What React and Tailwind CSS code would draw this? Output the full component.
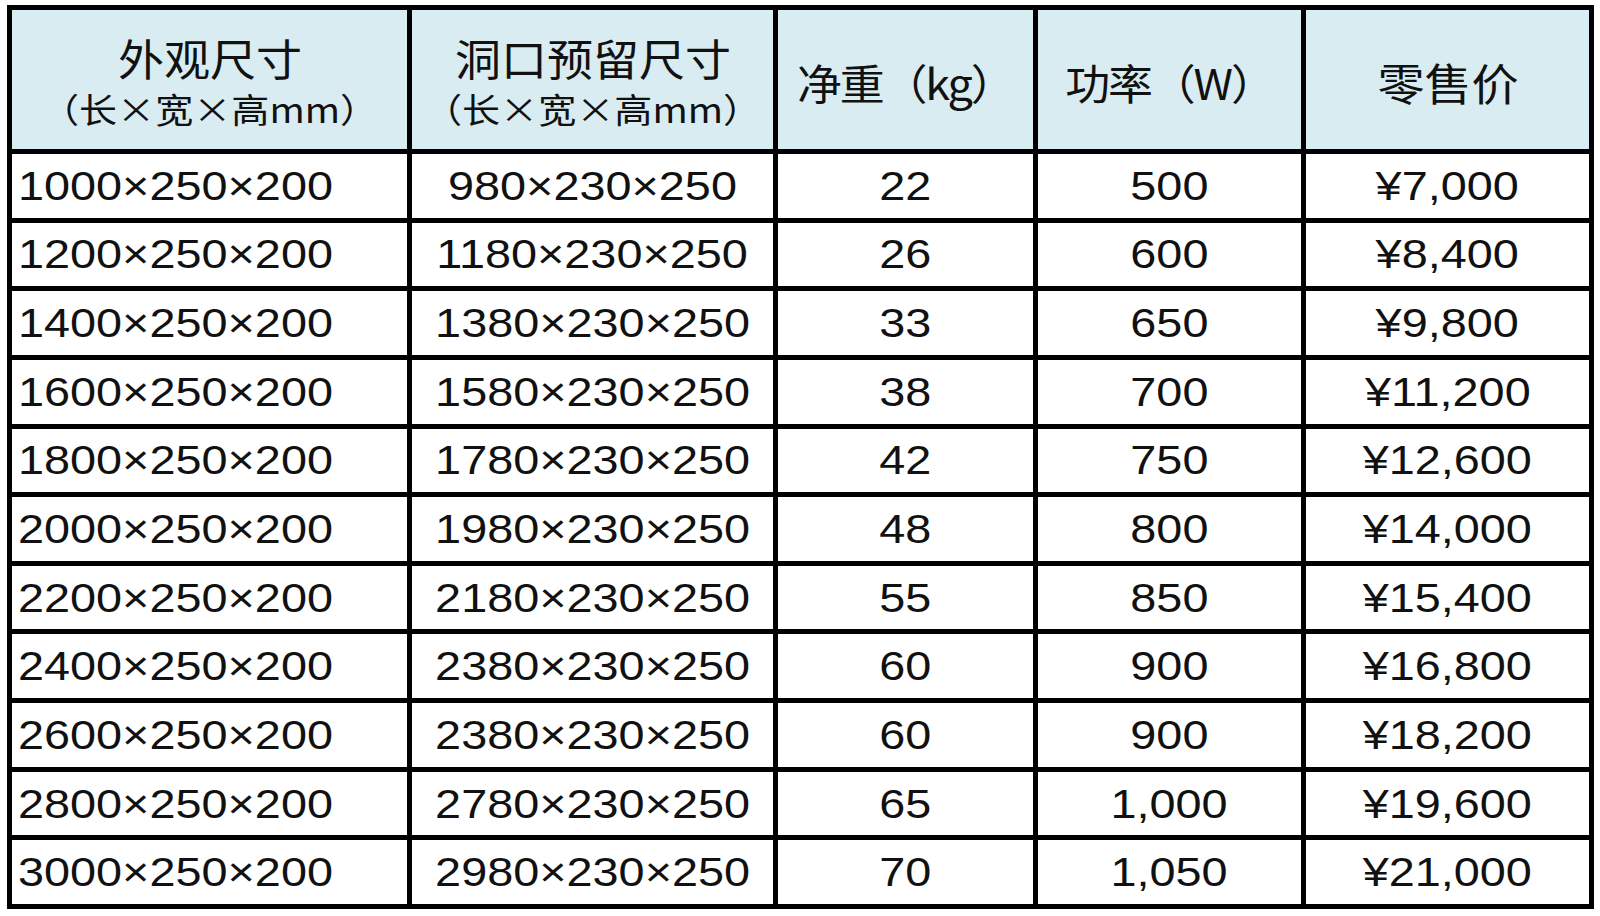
import React from "react";

const rows = [
  ["1000×250×200", "980×230×250", "22", "500", "¥7,000"],
  ["1200×250×200", "1180×230×250", "26", "600", "¥8,400"],
  ["1400×250×200", "1380×230×250", "33", "650", "¥9,800"],
  ["1600×250×200", "1580×230×250", "38", "700", "¥11,200"],
  ["1800×250×200", "1780×230×250", "42", "750", "¥12,600"],
  ["2000×250×200", "1980×230×250", "48", "800", "¥14,000"],
  ["2200×250×200", "2180×230×250", "55", "850", "¥15,400"],
  ["2400×250×200", "2380×230×250", "60", "900", "¥16,800"],
  ["2600×250×200", "2380×230×250", "60", "900", "¥18,200"],
  ["2800×250×200", "2780×230×250", "65", "1,000", "¥19,600"],
  ["3000×250×200", "2980×230×250", "70", "1,050", "¥21,000"],
];

function HeadTwo({ top }) {
  return (
    <div className="bg-[#d9ecf2] flex flex-col items-center pt-[21px] text-[#111] font-['Noto_Sans_CJK_SC','Noto_Sans',sans-serif]">
      <div className="h-[52px] leading-[52px] text-[43px] scale-x-[1.07] whitespace-nowrap">{top}</div>
      <div className="h-[52px] leading-[52px] text-[34px] scale-x-[1.12] whitespace-nowrap">（长×宽×高mm）</div>
    </div>
  );
}

function HeadOne({ children, tight }) {
  return (
    <div className="bg-[#d9ecf2] flex items-center justify-center pt-[4px] text-[#111] font-['Noto_Sans_CJK_SC','Noto_Sans',sans-serif]">
      <div
        className={
          "leading-none scale-x-[1.07] whitespace-nowrap " +
          (tight ? "text-[42px] tracking-[-2px]" : "text-[44px]")
        }
      >
        {children}
      </div>
    </div>
  );
}

function Cell({ children, left }) {
  return (
    <div
      className={
        "bg-white flex items-center text-[#111] font-['Liberation_Sans',Arial,sans-serif] " +
        (left ? "justify-start pl-[6px]" : "justify-center")
      }
    >
      <span
        className={
          "inline-block text-[40px] leading-none scale-x-[1.17] whitespace-nowrap " +
          (left ? "origin-left" : "origin-center")
        }
      >
        {children}
      </span>
    </div>
  );
}

export default function App() {
  return (
    <div className="w-[1600px] h-[916px] bg-white pt-[5px] pl-[7px] overflow-hidden">
      <div className="w-[1587px] h-[904px] bg-black p-[5px] grid grid-cols-[395px_361px_255px_263px_283px] grid-rows-[139px_repeat(11,minmax(0,1fr))] gap-[5px]">
        <HeadTwo top="外观尺寸" />
        <HeadTwo top="洞口预留尺寸" />
        <HeadOne tight>净重（kg）</HeadOne>
        <HeadOne tight>功率（W）</HeadOne>
        <HeadOne>零售价</HeadOne>
        {rows.map((r, i) => (
          <React.Fragment key={i}>
            <Cell left>{r[0]}</Cell>
            <Cell>{r[1]}</Cell>
            <Cell>{r[2]}</Cell>
            <Cell>{r[3]}</Cell>
            <Cell>{r[4]}</Cell>
          </React.Fragment>
        ))}
      </div>
    </div>
  );
}
